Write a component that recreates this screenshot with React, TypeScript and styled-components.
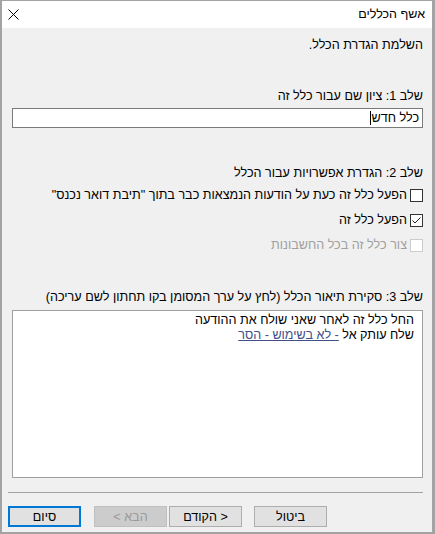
import React from "react";
import styled, { createGlobalStyle } from "styled-components";

const GlobalStyle = createGlobalStyle`
  html, body {
    margin: 0;
    padding: 0;
    background: #ffffff;
  }
  body {
    font-family: "Liberation Sans", "DejaVu Sans", Arial, sans-serif;
    font-size: 12px;
    color: #000;
  }
`;

const Window = styled.div`
  box-sizing: border-box;
  width: 435px;
  height: 534px;
  display: flex;
  flex-direction: column;
  border-style: solid;
  border-color: #a3a3a3;
  border-width: 1px 3px 2px 2px;
  background: #f0f0f0;
  direction: rtl;
  font-family: "Liberation Sans", "DejaVu Sans", Arial, sans-serif;
  font-size: 12.6px;
  line-height: 15px;
`;

const TitleBar = styled.div`
  height: 27px;
  flex: none;
  background: #ffffff;
  display: flex;
  align-items: center;
  justify-content: space-between;
  padding: 0 7px 0 5px;
`;

const Title = styled.span`
  font-size: 12.5px;
  color: #000;
`;

const CloseButton = styled.button`
  width: 12px;
  height: 12px;
  border: 0;
  padding: 0;
  background: transparent;
  display: flex;
  align-items: center;
  justify-content: center;
  margin-top: -1px;
`;

const Content = styled.div`
  display: flex;
  flex-direction: column;
  padding: 10px 9px 0 10px;
`;

const Text = styled.div<{ $gap?: number }>`
  margin-top: ${(p) => p.$gap ?? 0}px;
  height: 15px;
  white-space: nowrap;
`;

const NameInput = styled.div`
  box-sizing: border-box;
  height: 20px;
  margin-top: 4px;
  background: #fff;
  border: 1px solid #7a7a7a;
  display: flex;
  align-items: center;
  padding: 0 3px;
`;

const Caret = styled.span`
  display: inline-block;
  width: 1px;
  height: 14px;
  background: #000;
`;

const Options = styled.div`
  display: flex;
  flex-direction: column;
  margin-top: 2px;
`;

const OptionRow = styled.label<{ $disabled?: boolean }>`
  height: 25px;
  display: flex;
  align-items: center;
  gap: 3px;
  color: ${(p) => (p.$disabled ? "#a0a0a0" : "#000")};
  white-space: nowrap;
`;

const Box = styled.span<{ $disabled?: boolean }>`
  box-sizing: border-box;
  width: 13px;
  height: 13px;
  flex: none;
  background: #fff;
  border: 1px solid ${(p) => (p.$disabled ? "#cccccc" : "#333333")};
  display: flex;
  align-items: center;
  justify-content: center;
`;

const Description = styled.div`
  box-sizing: border-box;
  height: 168px;
  margin-top: 5px;
  background: #fff;
  border: 1px solid #a0a0a0;
  padding: 2px 8px 0 4px;
`;

const Line = styled.div`
  height: 15px;
  white-space: nowrap;
`;

const RuleLink = styled.a`
  color: #41508a;
  text-decoration: underline;
  cursor: pointer;
`;

const Footer = styled.div`
  display: flex;
  flex-direction: column;
  padding: 0 9px 0 6px;
  margin-top: 14px;
`;

const Separator = styled.div`
  height: 1px;
  background: #a0a0a0;
`;

const ButtonRow = styled.div`
  display: flex;
  justify-content: flex-end;
  margin-top: 13px;
`;

const Button = styled.button<{ $primary?: boolean; $gap?: number }>`
  box-sizing: border-box;
  width: 73px;
  height: 21px;
  margin-right: ${(p) => p.$gap ?? 0}px;
  padding: 0;
  font-family: inherit;
  font-size: 12.6px;
  color: #000;
  background: #e1e1e1;
  border: ${(p) => (p.$primary ? "2px solid #0078d7" : "1px solid #adadad")};
  direction: rtl;

  &:disabled {
    background: #cccccc;
    border-color: #bfbfbf;
    color: #9a9a9a;
  }
`;

type Option = { label: string; checked?: boolean; disabled?: boolean };

const options: Option[] = [
  { label: 'הפעל כלל זה כעת על הודעות הנמצאות כבר בתוך "תיבת דואר נכנס"' },
  { label: "הפעל כלל זה", checked: true },
  { label: "צור כלל זה בכל החשבונות", disabled: true },
];

export default function App() {
  return (
    <>
      <GlobalStyle />
      <Window>
        <TitleBar>
          <Title>אשף הכללים</Title>
          <CloseButton aria-label="סגור">
            <svg width="11" height="11" viewBox="0 0 11 11">
              <path d="M0.5 0.5 L10.5 10.5 M10.5 0.5 L0.5 10.5" stroke="#000" strokeWidth="1" fill="none" />
            </svg>
          </CloseButton>
        </TitleBar>

        <Content>
          <Text>השלמת הגדרת הכלל.</Text>

          <Text $gap={36}>שלב 1: ציון שם עבור כלל זה</Text>
          <NameInput>
            <span>כלל חדש</span>
            <Caret />
          </NameInput>

          <Text $gap={38}>שלב 2: הגדרת אפשרויות עבור הכלל</Text>
          <Options>
            {options.map((o) => (
              <OptionRow key={o.label} $disabled={o.disabled}>
                <Box $disabled={o.disabled}>
                  {o.checked && (
                    <svg width="11" height="11" viewBox="0 0 11 11">
                      <path d="M1.5 5.5 L4 8 L9.5 2.5" stroke="#222" strokeWidth="1" fill="none" />
                    </svg>
                  )}
                </Box>
                <span>{o.label}</span>
              </OptionRow>
            ))}
          </Options>

          <Text $gap={32}>שלב 3: סקירת תיאור הכלל (לחץ על ערך המסומן בקו תחתון לשם עריכה)</Text>
          <Description>
            <Line>החל כלל זה לאחר שאני שולח את ההודעה</Line>
            <Line>
              שלח עותק אל <RuleLink>- לא בשימוש - הסר</RuleLink>
            </Line>
          </Description>
        </Content>

        <Footer>
          <Separator />
          <ButtonRow>
            <Button>ביטול</Button>
            <Button $gap={12}>&lt; הקודם</Button>
            <Button $gap={2} disabled>
              הבא &gt;
            </Button>
            <Button $gap={13} $primary>
              סיום
            </Button>
          </ButtonRow>
        </Footer>
      </Window>
    </>
  );
}
